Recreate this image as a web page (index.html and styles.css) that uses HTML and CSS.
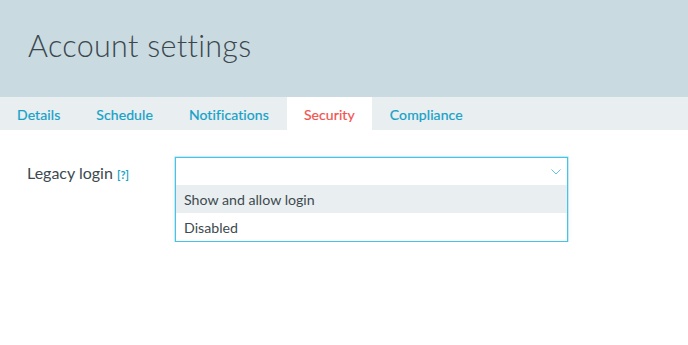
FILE: index.html
```html
<!DOCTYPE html>
<html lang="en">
<head>
<meta charset="utf-8">
<title>Account settings</title>
<link rel="stylesheet" href="styles.css">
</head>
<body>
<header class="header">
  <h1 class="title">Account settings</h1>
</header>
<nav class="tabs">
  <a class="tab">Details</a>
  <a class="tab">Schedule</a>
  <a class="tab">Notifications</a>
  <a class="tab tab-active">Security</a>
  <a class="tab">Compliance</a>
</nav>
<main class="content">
  <div class="field">
    <div class="label">Legacy login <span class="help">[?]</span></div>
    <div class="select">
      <div class="select-current">
        <svg class="chevron" width="10" height="6" viewBox="0 0 10 6"><path d="M0.5 0.5 L5 5 L9.5 0.5" fill="none" stroke="#5cc6e3" stroke-width="1"/></svg>
      </div>
      <div class="option option-hover">Show and allow login</div>
      <div class="option">Disabled</div>
    </div>
  </div>
</main>
</body>
</html>
```

FILE: styles.css
```css
* { box-sizing: border-box; }
body {
  margin: 0;
  background: #ffffff;
  font-family: "Lato", "Open Sans", sans-serif;
  color: #3d4a4f;
}
.header {
  height: 97px;
  background: #c9dae1;
  padding: 26px 0 0 28px;
}
.title {
  margin: 0;
  font-weight: 300;
  font-size: 30.5px;
  line-height: 38px;
  letter-spacing: 0.3px;
  color: #3b474c;
}
.tabs {
  display: flex;
  height: 33px;
  background: #e9eef1;
}
.tab {
  display: flex;
  align-items: center;
  padding: 2px 18px 0;
  font-size: 14px;
  letter-spacing: 0.1px;
  color: #13a1c7;
  font-weight: 400;
  -webkit-text-stroke: 0.2px currentColor;
}
.tab:first-child { padding-left: 17px; }
.tab-active {
  background: #ffffff;
  color: #f2524f;
  padding-left: 17px;
  padding-right: 17px;
}
.content {
  padding: 27px 0 0 27px;
}
.field {
  display: flex;
  align-items: flex-start;
}
.label {
  width: 148px;
  padding-top: 6px;
  font-size: 16px;
  color: #3d4a4f;
}
.help {
  font-size: 11px;
  font-weight: 700;
  color: #16a2c6;
}
.select {
  width: 393px;
  border: 1px solid #45c4e8;
  background: #fff;
  box-shadow: 0 0 0 0.6px rgba(69, 196, 232, 0.45), 0 0 6px rgba(0, 0, 0, 0.06);
}
.select-current {
  height: 27px;
  display: flex;
  align-items: center;
  justify-content: flex-end;
  padding-right: 6px;
}
.option {
  height: 28px;
  padding: 0 8px;
  display: flex;
  align-items: center;
  font-size: 14.2px;
  color: #3d4a4f;
}
.option-hover { background: #e9eef1; }
```
